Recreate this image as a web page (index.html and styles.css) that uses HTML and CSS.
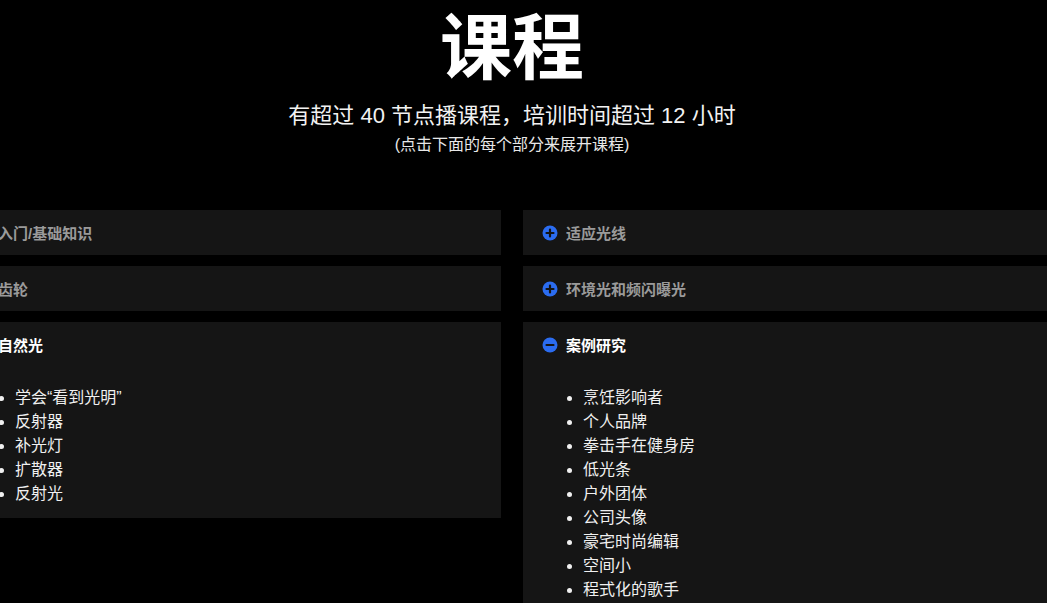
FILE: index.html
```html
<!DOCTYPE html>
<html lang="zh">
<head>
<meta charset="utf-8">
<link rel="stylesheet" href="styles.css">
</head>
<body>
<section class="course">
  <header class="intro">
    <h1 class="title">课程</h1>
    <p class="subtitle">有超过 40 节点播课程，培训时间超过 12 小时</p>
    <p class="hint">(点击下面的每个部分来展开课程)</p>
  </header>
  <div class="grid">
    <div class="col">
      <div class="card">
        <div class="head">
          <svg class="icon" viewBox="0 0 16 16"><circle cx="8" cy="8" r="7.5" fill="#2b6cf0"/><path d="M8 4.5v7M4.5 8h7" stroke="#141414" stroke-width="2.2" stroke-linecap="round"/></svg>
          <span>入门/基础知识</span>
        </div>
      </div>
      <div class="card">
        <div class="head">
          <svg class="icon" viewBox="0 0 16 16"><circle cx="8" cy="8" r="7.5" fill="#2b6cf0"/><path d="M8 4.5v7M4.5 8h7" stroke="#141414" stroke-width="2.2" stroke-linecap="round"/></svg>
          <span>齿轮</span>
        </div>
      </div>
      <div class="card open">
        <div class="head">
          <svg class="icon" viewBox="0 0 16 16"><circle cx="8" cy="8" r="7.5" fill="#2b6cf0"/><path d="M4.5 8h7" stroke="#141414" stroke-width="2.2" stroke-linecap="round"/></svg>
          <span>自然光</span>
        </div>
        <ul class="list">
          <li>学会“看到光明”</li>
          <li>反射器</li>
          <li>补光灯</li>
          <li>扩散器</li>
          <li>反射光</li>
        </ul>
      </div>
    </div>
    <div class="col">
      <div class="card">
        <div class="head">
          <svg class="icon" viewBox="0 0 16 16"><circle cx="8" cy="8" r="7.5" fill="#2b6cf0"/><path d="M8 4.5v7M4.5 8h7" stroke="#141414" stroke-width="2.2" stroke-linecap="round"/></svg>
          <span>适应光线</span>
        </div>
      </div>
      <div class="card">
        <div class="head">
          <svg class="icon" viewBox="0 0 16 16"><circle cx="8" cy="8" r="7.5" fill="#2b6cf0"/><path d="M8 4.5v7M4.5 8h7" stroke="#141414" stroke-width="2.2" stroke-linecap="round"/></svg>
          <span>环境光和频闪曝光</span>
        </div>
      </div>
      <div class="card open">
        <div class="head">
          <svg class="icon" viewBox="0 0 16 16"><circle cx="8" cy="8" r="7.5" fill="#2b6cf0"/><path d="M4.5 8h7" stroke="#141414" stroke-width="2.2" stroke-linecap="round"/></svg>
          <span>案例研究</span>
        </div>
        <ul class="list">
          <li>烹饪影响者</li>
          <li>个人品牌</li>
          <li>拳击手在健身房</li>
          <li>低光条</li>
          <li>户外团体</li>
          <li>公司头像</li>
          <li>豪宅时尚编辑</li>
          <li>空间小</li>
          <li>程式化的歌手</li>
        </ul>
      </div>
    </div>
  </div>
</section>
</body>
</html>
```

FILE: styles.css
```css
html, body {
  margin: 0;
  padding: 0;
  background: #000;
  overflow: hidden;
}
body {
  width: 1047px;
  height: 603px;
  font-family: "Liberation Sans", "Noto Sans CJK SC", sans-serif;
  color: #fff;
}
.course {
  width: 1114px;
  margin-left: -45px;
}
.intro {
  text-align: center;
  padding-top: 4px;
}
.title {
  margin: 0;
  font-size: 72px;
  line-height: 88px;
  font-weight: 700;
}
.subtitle {
  margin: 9px 0 0;
  font-size: 22px;
  line-height: 30px;
  color: #f2f2f2;
}
.hint {
  margin: 2px 0 0;
  font-size: 16px;
  line-height: 24px;
  color: #e8e8e8;
}
.grid {
  display: grid;
  grid-template-columns: 1fr 1fr;
  column-gap: 22px;
  margin-top: 53px;
}
.col {
  display: flex;
  flex-direction: column;
  gap: 11px;
}
.card {
  background: #151515;
}
.head {
  height: 45px;
  display: flex;
  align-items: center;
  gap: 8px;
  padding-left: 19px;
  font-size: 15px;
  font-weight: 700;
  color: #9a9a9a;
}
.open .head {
  color: #fff;
}
.icon {
  width: 16px;
  height: 16px;
  flex: none;
}
.list {
  margin: 19px 0 0;
  padding: 0 0 12px 60px;
  list-style: disc;
  font-size: 16px;
  line-height: 24px;
  color: #f0f0f0;
}
```
